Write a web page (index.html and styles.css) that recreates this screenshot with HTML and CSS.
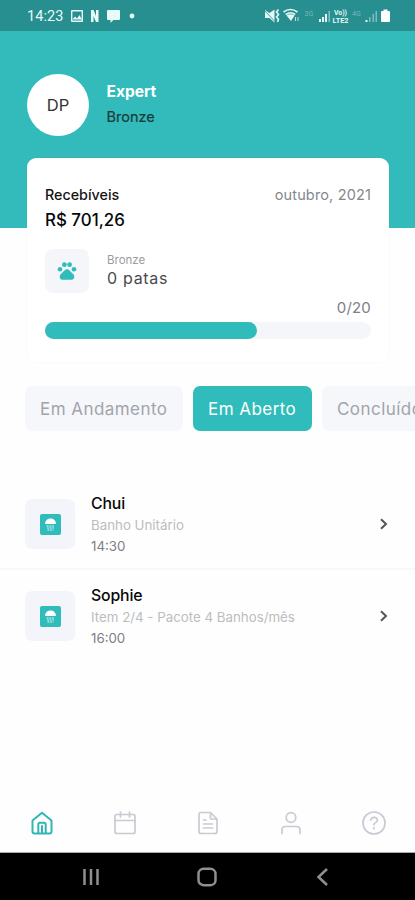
FILE: index.html
```html
<!DOCTYPE html>
<html lang="pt-BR">
<head>
<meta charset="utf-8">
<title>Início</title>
<link rel="stylesheet" href="styles.css">
</head>
<body>
<div class="app">
  <div class="status">
    <span class="clock">14:23</span>
    <svg class="st-left" width="68" height="16" viewBox="0 0 68 16" fill="#e9fafa">
      <path fill-rule="evenodd" d="M4 2h10q1 0 1 1v10q0 1-1 1H4q-1 0-1-1V3q0-1 1-1zm.4 1.500v9h9.200v-9zM4.500 11.500l2.500-3 2 2 2.500-3.500 2.200 4.500z"/>
      <path d="M23 2h2.600l2.400 6V2h2.500v12H28l-2.500-6v6H23z"/>
      <path d="M40 2h11q1 0 1 1v8q0 1-1 1h-5.500l-3 2.700V12H40q-1 0-1-1V3q0-1 1-1z"/>
      <circle cx="64" cy="8" r="2.400"/>
    </svg>
    <svg class="st-right" width="130" height="18" viewBox="0 0 130 18" fill="#e4f7f7">
      <path d="M-1 3l4.500 3L8.500 2.500v13l-5-4.500H-1z"/>
      <path d="M-1 4l9.500 10" stroke="#278f8f" stroke-width=".8"/>
      <path d="M12.500 2.500l-2 2.500 2 2.500-2 2.500 2 2.500-1 2.500" fill="none" stroke="#e4f7f7" stroke-width="1.600"/>
      <g fill="none" stroke="#e4f7f7" stroke-width="1.600"><path d="M17.500 5q7-5 14 0M19.800 7.500q4.700-3.500 9.400 0"/></g>
      <path d="M20.500 8.500q4-2.500 8 0L25 14z"/>
      <path d="M29.500 10v4M32 10v4" stroke="#b9dede" stroke-width="1"/>
      <text class="gen" x="38.500" y="9">3G</text>
      <path d="M53 12h2v3h-2zM56 10h2v5h-2zM59 7h2v8h-2z"/><path d="M62.500 4H64v11h-1.500z" opacity=".5"/>
      <text class="vo" x="68" y="8" textLength="13" lengthAdjust="spacingAndGlyphs">Vo))</text>
      <text class="vo" x="66.500" y="15.500" textLength="16" lengthAdjust="spacingAndGlyphs">LTE2</text>
      <text class="gen" x="86" y="9">4G</text>
      <path d="M99.500 13h2v2h-2z"/><path d="M103 10h1.500v5H103zM106.500 7h1.500v8h-1.500zM109.500 4h1.500v11h-1.500z" opacity=".45"/>
      <path d="M117.500 2.500h4V4h1.500q1 0 1 1v9q0 1-1 1h-7q-1 0-1-1V5q0-1 1-1h1.500z" fill="#fff"/>
    </svg>
  </div>

  <header class="hero">
    <div class="profile">
      <div class="avatar">DP</div>
      <div class="who">
        <div class="level">Expert</div>
        <div class="tier">Bronze</div>
      </div>
    </div>
  </header>

  <section class="card">
    <div class="card-top"><span class="label">Recebíveis</span><span class="month">outubro, 2021</span></div>
    <div class="amount">R$ 701,26</div>
    <div class="paws">
      <div class="paw-box">
        <svg width="20" height="20" viewBox="0 0 20 20" fill="#30bcba"><circle cx="3" cy="8.200" r="2.300"/><circle cx="7.400" cy="3.700" r="2.400"/><circle cx="12.600" cy="3.700" r="2.400"/><circle cx="17" cy="8.200" r="2.300"/><path d="M10 8.200c2 0 3.200 2 4.500 3.400 1.300 1.300 3.200 2.700 2.800 4.700-.5 2.600-2.700 2.500-4.200 2.500h-6.200c-1.500 0-3.700.100-4.200-2.500-.4-2 1.500-3.400 2.800-4.700C6.800 10.200 8 8.200 10 8.200z"/></svg>
      </div>
      <div><div class="paw-tier">Bronze</div><div class="paw-count">0 patas</div></div>
    </div>
    <div class="ratio">0/20</div>
    <div class="track"><div class="fill"></div></div>
  </section>

  <nav class="tabs">
    <span class="tab tab-progress">Em Andamento</span>
    <span class="tab tab-open">Em Aberto</span>
    <span class="tab tab-done">Concluído</span>
  </nav>

  <main class="list">
    <article class="row">
      <div class="thumb"><svg width="21" height="21" viewBox="0 0 21 21"><rect width="21" height="21" rx="2" fill="#30bcba"/><path d="M5 10Q5.500 4.500 10.500 4.500T16 10z" fill="#fff"/><path d="M6.500 12h8M7 14h7M7.500 16h6" stroke="#d8f3f2" stroke-width="1.200" stroke-dasharray="2 .7"/></svg></div>
      <div class="info"><div class="name">Chui</div><div class="service service-a">Banho Unitário</div><div class="time">14:30</div></div>
      <svg class="chev" width="10" height="14" viewBox="0 0 10 14"><path d="M2 2.200L7 7l-5 4.800"/></svg>
    </article>
    <article class="row">
      <div class="thumb"><svg width="21" height="21" viewBox="0 0 21 21"><rect width="21" height="21" rx="2" fill="#30bcba"/><path d="M5 10Q5.500 4.500 10.500 4.500T16 10z" fill="#fff"/><path d="M6.500 12h8M7 14h7M7.500 16h6" stroke="#d8f3f2" stroke-width="1.200" stroke-dasharray="2 .7"/></svg></div>
      <div class="info"><div class="name">Sophie</div><div class="service service-b">Item 2/4 - Pacote 4 Banhos/mês</div><div class="time">16:00</div></div>
      <svg class="chev" width="10" height="14" viewBox="0 0 10 14"><path d="M2 2.200L7 7l-5 4.800"/></svg>
    </article>
  </main>

  <nav class="bottom">
    <svg class="on" viewBox="0 0 24 24"><path d="M2.500 9.500L12 1.800l9.500 7.700v11q0 2-2 2h-15q-2 0-2-2z"/><path d="M8.300 22V13.500q0-1.700 1.700-1.700h4q1.700 0 1.700 1.700V22M12 15v7"/></svg>
    <svg viewBox="0 0 24 24"><rect x="2" y="3.500" width="20" height="19" rx="2"/><path d="M2 9.500h20M7.500 1v5M16.500 1v5"/></svg>
    <svg viewBox="0 0 24 24"><path d="M14.500 1.500H5q-2 0-2 2v17q0 2 2 2h14q2 0 2-2V8zM14.500 1.500V8H21M7.500 9H10M7.500 13h9M7.500 17h9"/></svg>
    <svg viewBox="0 0 24 24"><circle cx="12" cy="6.500" r="4.800"/><path d="M3 22.500V19q0-3.500 3.500-3.500h11q3.500 0 3.500 3.500v3.500"/></svg>
    <svg viewBox="0 0 24 24"><circle cx="12" cy="12" r="11"/><path d="M8.800 9.200q.5-2.800 3.400-2.800t3.200 2.800q0 1.800-2 2.600-1.400.6-1.400 2M12 16.600v1.200"/></svg>
  </nav>

  <footer class="system">
    <svg width="20" height="20" viewBox="0 0 20 20"><path d="M3.500 2v16M10 2v16M16.500 2v16"/></svg>
    <svg width="20" height="20" viewBox="0 0 20 20"><rect x="1.500" y="1.800" width="17" height="16.400" rx="5"/></svg>
    <svg width="20" height="20" viewBox="0 0 20 20"><path d="M14 2L5.500 10l8.500 8"/></svg>
  </footer>
</div>
</body>
</html>
```
FILE: styles.css
```css
* { box-sizing: border-box; }
body { margin: 0; background: #fefefe; font-family: Inter, "Liberation Sans", sans-serif; }
.app { width: 415px; height: 900px; overflow: hidden; display: flex; flex-direction: column; }
.app > * { flex-shrink: 0; }
svg { display: block; overflow: visible; }

.status { height: 31px; background: #278f8f; display: flex; align-items: center; padding: 1px 19px 0 27px; }
.clock { font: 14.5px/20px Roboto, sans-serif; color: #e9fafa; letter-spacing: .1px; width: 41px; padding-top: 1px; }
.st-right { margin-left: auto; }
.gen { font: 7px Roboto, sans-serif; fill: #76b8b8; }
.vo { font: bold 7.500px Roboto, sans-serif; }

.hero { height: 197px; background: #33bbbb; padding: 43px 27px 0; }
.profile { display: flex; align-items: center; gap: 17.5px; }
.avatar { width: 62px; height: 62px; border-radius: 50%; background: #fff; color: #333; font-size: 16.500px; display: flex; align-items: center; justify-content: center; }
.who { padding-top: 1px; }
.level { font-size: 15.500px; line-height: 25px; font-weight: 700; color: #fff; margin-top: -4px; }
.tier { font-size: 14.500px; line-height: 25px; color: #183c3c; -webkit-text-stroke: .2px; }

.card { width: 362px; height: 204px; margin: -70px 0 0 27px; border-radius: 9px; background: #fff; padding: 26px 18px 0; box-shadow: 0 0 3px rgba(0, 0, 0, .035); }
.card-top { display: flex; justify-content: space-between; line-height: 21px; height: 20px; }
.label { font-size: 14.300px; font-weight: 500; color: #151515; }
.month { font-size: 14.500px; color: #84878e; letter-spacing: .15px; }
.amount { font-size: 16.900px; line-height: 24px; font-weight: 500; color: #080808; margin-top: 4px; }
.paws { display: flex; gap: 18px; margin-top: 17px; height: 44px; }
.paw-box { width: 44px; height: 44px; border-radius: 8px; background: #f5f6fa; display: grid; place-items: center; }
.paw-tier { font-size: 11.500px; line-height: 14px; color: #9b9b9f; margin-top: 4px; }
.paw-count { font-size: 16px; line-height: 23px; color: #4a4a4c; letter-spacing: .7px; }
.ratio { font-size: 15px; line-height: 20px; text-align: right; color: #7d8087; margin-top: 5px; letter-spacing: .2px; }
.track { height: 17px; margin-top: 4px; border-radius: 9px; background: #f5f6fa; }
.fill { width: 212px; height: 17px; border-radius: 9px; background: #30bcba; }

.tabs { display: flex; gap: 10px; margin: 24px 0 0 25px; height: 45px; }
.tab { flex: none; border-radius: 7px; background: #f6f7fb; color: #a2a4ab; font-size: 17px; line-height: 46px; padding-left: 15px; white-space: nowrap; letter-spacing: .45px; }
.tab-progress { width: 158px; }
.tab-open { width: 119px; background: #30bcba; color: #fff; }
.tab-done { width: 120px; }

.list { margin-top: 47px; }
.row { height: 92px; display: flex; padding: 0 26px 0 25px; }
.row:first-child { border-bottom: 2px solid #f8f8f9; }
.thumb { width: 50px; height: 50px; margin-top: 21px; border-radius: 7px; background: #f3f5fa; display: grid; place-items: center; }
.info { margin: 15px 0 0 16px; }
.name { font-size: 15.800px; line-height: 21px; font-weight: 500; color: #080808; letter-spacing: -.15px; }
.service { font-size: 13.300px; line-height: 22px; color: #bbbdbf; }
.time { font-size: 13.300px; line-height: 20px; color: #7b8087; }
.chev { margin: 39px 0 0 auto; fill: none; stroke: #555; stroke-width: 2; }

.bottom { margin-top: auto; height: 59px; display: flex; justify-content: space-between; padding: 17px 29px 0 30px; border-bottom: 1px solid #aaa; }
.bottom svg { width: 24px; height: 24px; fill: none; stroke: #c9cad3; stroke-width: 1.700; stroke-linejoin: round; stroke-linecap: round; }
.bottom .on { stroke: #30b7b5; stroke-width: 2; }
.system { height: 47px; background: #000; display: flex; justify-content: space-between; padding: 14px 82px 0 81px; }
.system svg { fill: none; stroke: #8f8f8f; stroke-width: 2.500; }
```
